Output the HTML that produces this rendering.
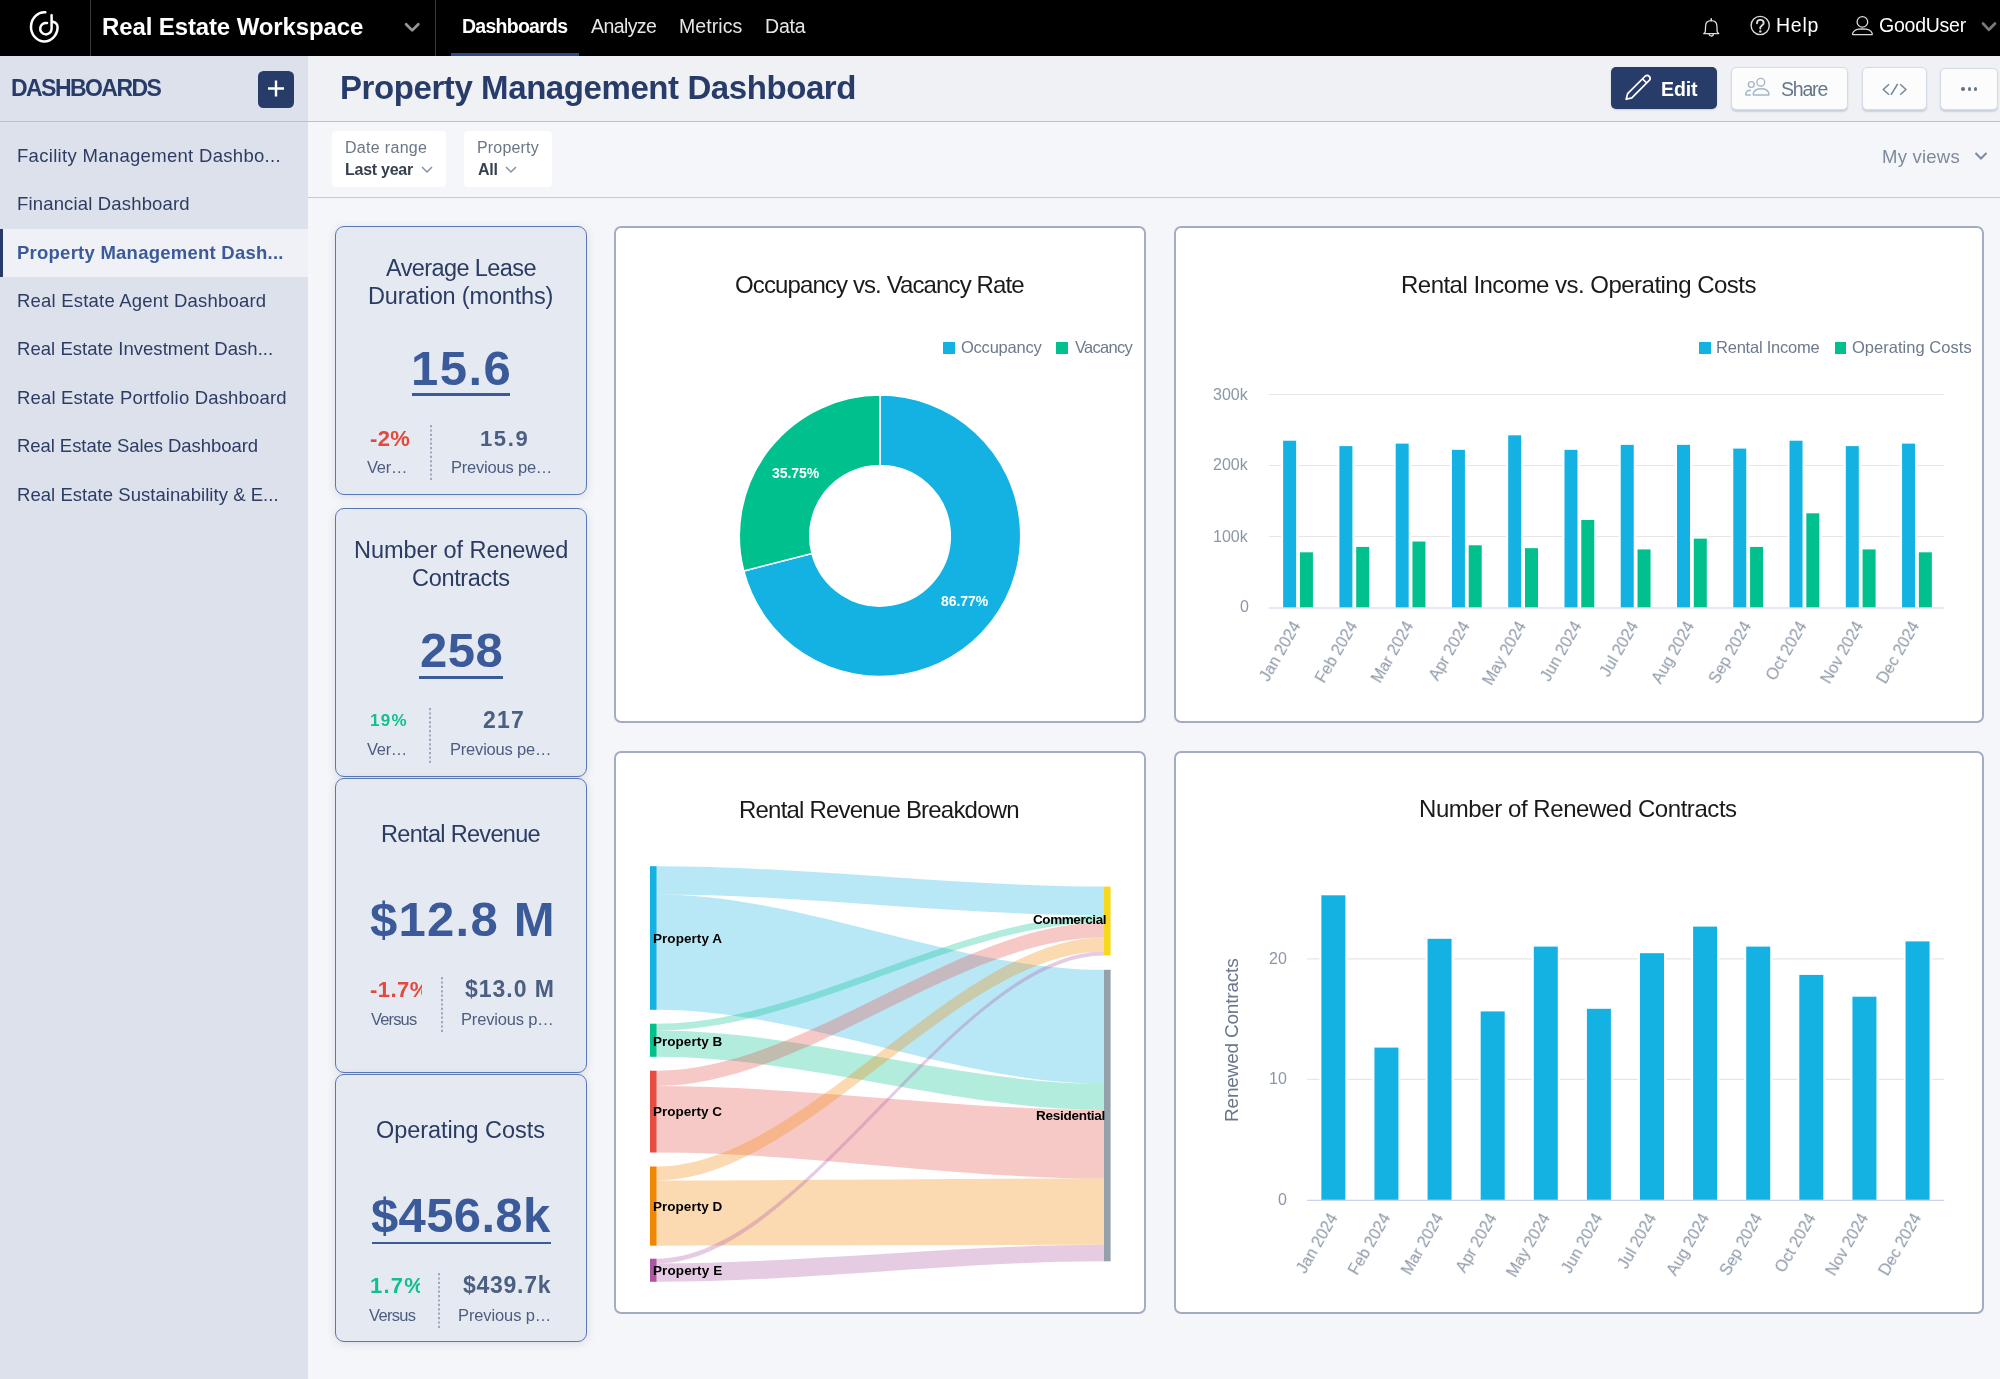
<!DOCTYPE html>
<html><head><meta charset="utf-8"><title>Property Management Dashboard</title>
<style>
html,body{margin:0;padding:0;width:2000px;height:1379px;overflow:hidden;background:#f5f6fa}
body{position:relative;font-family:"Liberation Sans",sans-serif}
.t{position:absolute;white-space:nowrap;line-height:1;-webkit-font-smoothing:antialiased;will-change:transform}
body{-webkit-font-smoothing:antialiased}
</style></head><body>
<div style="position:absolute;left:0px;top:0px;width:2000px;height:1379px;background:#f5f6fa"></div>
<div style="position:absolute;left:0px;top:0px;width:2000px;height:56px;background:#000"></div>
<div style="position:absolute;left:90px;top:0px;width:1px;height:56px;background:#3a3a3a"></div>
<div style="position:absolute;left:435px;top:0px;width:1px;height:56px;background:#3a3a3a"></div>
<svg style="position:absolute;left:0;top:0" width="90" height="56" viewBox="0 0 90 56">
<path d="M45.4 12.3 A13.3 14.6 0 1 0 57.6 27.4 C57.6 24.6 56 22.6 53 21.8" fill="none" stroke="#fff" stroke-width="2.5" stroke-linecap="round"/>
<path d="M51.6 15.2 L51.6 28.8 A5.7 5.7 0 1 1 47 23.1" fill="none" stroke="#fff" stroke-width="2.5" stroke-linecap="round"/>
</svg>
<div class="t" style="left:102.44px;top:15.00px;font-size:24px;color:#fff;font-weight:700;letter-spacing:-0.118px;">Real Estate Workspace</div>
<svg style="position:absolute;left:403px;top:20px" width="18" height="14"><path d="M3.1 4.3 L9.2 10.4 L15.3 4.3" fill="none" stroke="#979797" stroke-width="2.7" stroke-linecap="round" stroke-linejoin="round"/></svg>
<div class="t" style="left:461.73px;top:17.00px;font-size:19.5px;color:#fff;font-weight:700;letter-spacing:-0.740px;">Dashboards</div>
<div class="t" style="left:591.00px;top:17.00px;font-size:19.5px;color:#e6e6e6;letter-spacing:-0.590px;">Analyze</div>
<div class="t" style="left:679.44px;top:17.00px;font-size:19.5px;color:#e6e6e6;letter-spacing:0.075px;">Metrics</div>
<div class="t" style="left:765.44px;top:17.00px;font-size:19.5px;color:#e6e6e6;letter-spacing:-0.195px;">Data</div>
<div style="position:absolute;left:451px;top:53px;width:128px;height:3px;background:#2f4a8a"></div>
<svg style="position:absolute;left:0;top:0" width="2000" height="56">
<path d="M1703.8 33.7 L1705.3 31.8 L1705.6 26.3 C1705.6 22.5 1708 20.7 1711.2 20.7 C1714.4 20.7 1716.9 22.5 1716.9 26.3 L1717.2 31.8 L1718.7 33.7 Z" fill="none" stroke="#dcdcdc" stroke-width="1.3" stroke-linejoin="round"/>
<path d="M1711.2 20.7 L1711.2 18.9" stroke="#dcdcdc" stroke-width="1.6" stroke-linecap="round"/>
<path d="M1709.1 33.9 A2.1 2.1 0 0 0 1713.3 33.9" fill="none" stroke="#dcdcdc" stroke-width="1.3"/>
<circle cx="1760.2" cy="25.5" r="9.1" fill="none" stroke="#dcdcdc" stroke-width="1.4"/>
<path d="M1757 23.2 C1757 20.9 1758.4 19.9 1760.3 19.9 C1762.3 19.9 1763.7 21.1 1763.7 22.9 C1763.7 25.1 1760.4 25.6 1760.3 27.4 L1760.3 28.6" fill="none" stroke="#dcdcdc" stroke-width="1.9" stroke-linecap="round"/>
<circle cx="1760.3" cy="31.4" r="1.2" fill="#dcdcdc"/>
<circle cx="1862.4" cy="21.9" r="5.3" fill="none" stroke="#dcdcdc" stroke-width="1.3"/>
<path d="M1853.4 34.7 L1871.5 34.7 Q1872.6 34.7 1872.2 33.4 Q1871 28.9 1862.4 28.8 Q1853.8 28.9 1852.6 33.4 Q1852.3 34.7 1853.4 34.7 Z" fill="none" stroke="#dcdcdc" stroke-width="1.3"/>
</svg>
<div class="t" style="left:1776.44px;top:16.00px;font-size:19.5px;color:#fff;letter-spacing:0.756px;">Help</div>
<div class="t" style="left:1879.03px;top:16.00px;font-size:19.5px;color:#fff;letter-spacing:-0.236px;">GoodUser</div>
<svg style="position:absolute;left:1979px;top:19px" width="21" height="14"><path d="M4 4.5 L9.9 10.8 L16 4.5" fill="none" stroke="#7a7a7a" stroke-width="2.7" stroke-linecap="round" stroke-linejoin="round"/></svg>
<div style="position:absolute;left:0px;top:56px;width:308px;height:1323px;background:#dde1ec"></div>
<div class="t" style="left:11.00px;top:77.00px;font-size:23px;color:#283c6a;font-weight:700;letter-spacing:-1.555px;">DASHBOARDS</div>
<div style="position:absolute;left:258px;top:70.5px;width:36px;height:37px;background:#283c6a;border-radius:5.5px"></div>
<svg style="position:absolute;left:258px;top:70px" width="36" height="37"><path d="M18 10.5 L18 26.5 M10 18.5 L26 18.5" stroke="#fff" stroke-width="2.4"/></svg>
<div style="position:absolute;left:0px;top:121px;width:308px;height:1px;background:#b9c0d1"></div>
<div style="position:absolute;left:0px;top:229px;width:308px;height:48px;background:#eff1f6"></div>
<div style="position:absolute;left:0px;top:229px;width:3px;height:48px;background:#283c6a"></div>
<div class="t" style="left:17.12px;top:147.00px;font-size:18.5px;color:#2c3d63;letter-spacing:0.308px;">Facility Management Dashbo...</div>
<div class="t" style="left:17.12px;top:195.00px;font-size:18.5px;color:#2c3d63;letter-spacing:0.164px;">Financial Dashboard</div>
<div class="t" style="left:17.40px;top:244.00px;font-size:18.5px;color:#3a5a9a;font-weight:700;letter-spacing:0.246px;">Property Management Dash...</div>
<div class="t" style="left:17.12px;top:292.00px;font-size:18.5px;color:#2c3d63;letter-spacing:0.206px;">Real Estate Agent Dashboard</div>
<div class="t" style="left:17.12px;top:340.00px;font-size:18.5px;color:#2c3d63;letter-spacing:0.039px;">Real Estate Investment Dash...</div>
<div class="t" style="left:17.12px;top:389.00px;font-size:18.5px;color:#2c3d63;letter-spacing:0.177px;">Real Estate Portfolio Dashboard</div>
<div class="t" style="left:17.12px;top:437.00px;font-size:18.5px;color:#2c3d63;letter-spacing:-0.063px;">Real Estate Sales Dashboard</div>
<div class="t" style="left:17.12px;top:486.00px;font-size:18.5px;color:#2c3d63;letter-spacing:0.045px;">Real Estate Sustainability &amp; E...</div>
<div style="position:absolute;left:308px;top:56px;width:1692px;height:65px;background:#eff1f5"></div>
<div style="position:absolute;left:308px;top:121px;width:1692px;height:1px;background:#b9c0d1"></div>
<div class="t" style="left:339.66px;top:71.00px;font-size:33px;color:#283c6a;font-weight:700;letter-spacing:-0.417px;">Property Management Dashboard</div>
<div style="position:absolute;left:1611px;top:67px;width:106px;height:42px;background:#283c6a;border-radius:5px;box-shadow:0 1px 2px rgba(0,0,0,.15)"></div>
<svg style="position:absolute;left:0;top:0" width="2000" height="130">
<path d="M1626.2 99.3 L1627.6 93.7 L1645.3 76 A3 3 0 0 1 1649.5 80.2 L1631.8 97.9 Z M1642.5 78.8 L1646.7 83" fill="none" stroke="#fff" stroke-width="1.7" stroke-linejoin="round"/>
</svg>
<div class="t" style="left:1661.23px;top:80.00px;font-size:19.5px;color:#fff;font-weight:700;letter-spacing:-0.098px;">Edit</div>
<div style="position:absolute;left:1731px;top:67px;width:117px;height:42.5px;background:#fcfcfd;border:1px solid #d3dbe5;box-sizing:border-box;border-radius:5px;box-shadow:0 1.5px 1.5px rgba(120,140,165,.3)"></div>
<div style="position:absolute;left:1862px;top:67px;width:64.5px;height:43px;background:#fcfcfd;border:1px solid #d3dbe5;box-sizing:border-box;border-radius:5px;box-shadow:0 1.5px 1.5px rgba(120,140,165,.3)"></div>
<div style="position:absolute;left:1940px;top:68px;width:57.5px;height:42px;background:#fcfcfd;border:1px solid #d3dbe5;box-sizing:border-box;border-radius:5px;box-shadow:0 1.5px 1.5px rgba(120,140,165,.3)"></div>
<svg style="position:absolute;left:0;top:0" width="2000" height="130">
<g fill="none" stroke="#a5b6c5" stroke-width="1.4">
<circle cx="1751.3" cy="84.5" r="2.9"/>
<circle cx="1760.8" cy="82.3" r="3.9"/>
<path d="M1754 95 L1768.3 95 Q1769.2 95 1769 94 C1768.5 90.5 1765 88.7 1761.1 88.7 C1757.2 88.7 1753.7 90.5 1753.2 94 Q1753 95 1754 95 Z"/>
<path d="M1750.8 95 L1746.3 95 Q1745.6 95 1745.7 94.2 C1746 91.8 1748 90.3 1750.8 90.3"/>
</g></svg>
<div class="t" style="left:1781.12px;top:80.00px;font-size:19.5px;color:#65768a;letter-spacing:-1.203px;">Share</div>
<svg style="position:absolute;left:1880px;top:80px" width="28" height="18"><path d="M9 4.2 L3.3 9.5 L9 14.8 M20.2 4.2 L25.9 9.5 L20.2 14.8 M17.6 4 L11 14.8" fill="none" stroke="#76879a" stroke-width="1.5"/></svg>
<div style="position:absolute;left:1961.2px;top:87.1px;width:3.6px;height:3.6px;background:#67788b;border-radius:50%"></div>
<div style="position:absolute;left:1967.5px;top:87.1px;width:3.6px;height:3.6px;background:#67788b;border-radius:50%"></div>
<div style="position:absolute;left:1973.8px;top:87.1px;width:3.6px;height:3.6px;background:#67788b;border-radius:50%"></div>
<div style="position:absolute;left:308px;top:197px;width:1692px;height:1px;background:#c3c9d7"></div>
<div style="position:absolute;left:332px;top:131px;width:114px;height:56px;background:#fff;border-radius:4px"></div>
<div style="position:absolute;left:464px;top:131px;width:88px;height:56px;background:#fff;border-radius:4px"></div>
<div class="t" style="left:344.72px;top:140.00px;font-size:16px;color:#6b7685;letter-spacing:0.311px;">Date range</div>
<div class="t" style="left:344.96px;top:162.00px;font-size:16px;color:#37414e;font-weight:700;letter-spacing:-0.255px;">Last year</div>
<svg style="position:absolute;left:419px;top:163px" width="16" height="12"><path d="M3 4 L8 9 L13 4" fill="none" stroke="#8492a6" stroke-width="1.5"/></svg>
<div class="t" style="left:477.02px;top:140.00px;font-size:16px;color:#6b7685;letter-spacing:0.171px;">Property</div>
<div class="t" style="left:477.90px;top:162.00px;font-size:16px;color:#37414e;font-weight:700;letter-spacing:-0.280px;">All</div>
<svg style="position:absolute;left:503px;top:163px" width="16" height="12"><path d="M3 4 L8 9 L13 4" fill="none" stroke="#8492a6" stroke-width="1.5"/></svg>
<div class="t" style="left:1882.02px;top:148.00px;font-size:18.5px;color:#7d8a9b;letter-spacing:0.228px;">My views</div>
<svg style="position:absolute;left:1972px;top:148px" width="18" height="16"><path d="M3.5 5 L9 10.5 L14.5 5" fill="none" stroke="#7d8a9b" stroke-width="2"/></svg>
<div style="position:absolute;left:335px;top:225.5px;width:252px;height:269.0px;background:#e5e9f1;border:1.3px solid #5a78b6;box-sizing:border-box;border-radius:9px;box-shadow:0 2px 10px rgba(60,80,120,.14)"></div>
<div style="position:absolute;left:335px;top:508px;width:252px;height:268.5px;background:#e5e9f1;border:1.3px solid #5a78b6;box-sizing:border-box;border-radius:9px;box-shadow:0 2px 10px rgba(60,80,120,.14)"></div>
<div style="position:absolute;left:335px;top:777.5px;width:252px;height:295.5px;background:#e5e9f1;border:1.3px solid #5a78b6;box-sizing:border-box;border-radius:9px;box-shadow:0 2px 10px rgba(60,80,120,.14)"></div>
<div style="position:absolute;left:335px;top:1073.5px;width:252px;height:268.0px;background:#e5e9f1;border:1.3px solid #5a78b6;box-sizing:border-box;border-radius:9px;box-shadow:0 2px 10px rgba(60,80,120,.14)"></div>
<div class="t" style="left:386.20px;top:257.00px;font-size:23.5px;color:#2b3c63;letter-spacing:-0.595px;">Average Lease</div>
<div class="t" style="left:368.12px;top:285.00px;font-size:23.5px;color:#2b3c63;letter-spacing:-0.169px;">Duration (months)</div>
<div class="t" style="left:410.56px;top:344.00px;font-size:49px;color:#3b5a9a;font-weight:700;letter-spacing:1.450px;">15.6</div>
<div style="position:absolute;left:411.6px;top:393px;width:98.5px;height:2.6px;background:#3b5a9a"></div>
<div class="t" style="left:369.72px;top:428.00px;font-size:22px;color:#e3493c;font-weight:700;letter-spacing:0.335px;">-2%</div>
<div class="t" style="left:366.52px;top:459.00px;font-size:16.5px;color:#4c5d80;letter-spacing:-0.247px;">Ver…</div>
<div class="t" style="left:479.68px;top:428.00px;font-size:22px;color:#4b5f82;font-weight:700;letter-spacing:1.633px;">15.9</div>
<div class="t" style="left:450.88px;top:459.00px;font-size:16.5px;color:#4c5d80;letter-spacing:-0.207px;">Previous pe…</div>
<svg style="position:absolute;left:429px;top:425px" width="4" height="58"><line x1="2" y1="0" x2="2" y2="56" stroke="#6d7d9c" stroke-width="1.2" stroke-dasharray="2.2 2.2"/></svg>
<div class="t" style="left:353.62px;top:539.00px;font-size:23.5px;color:#2b3c63;letter-spacing:-0.075px;">Number of Renewed</div>
<div class="t" style="left:411.82px;top:567.00px;font-size:23.5px;color:#2b3c63;letter-spacing:-0.323px;">Contracts</div>
<div class="t" style="left:419.63px;top:626.00px;font-size:49px;color:#3b5a9a;font-weight:700;letter-spacing:0.450px;">258</div>
<div style="position:absolute;left:419px;top:676px;width:83.7px;height:2.6px;background:#3b5a9a"></div>
<div class="t" style="left:370.38px;top:712.00px;font-size:17px;color:#12c08a;font-weight:700;letter-spacing:1.323px;">19%</div>
<div class="t" style="left:366.72px;top:741.00px;font-size:16.5px;color:#4c5d80;letter-spacing:-0.313px;">Ver…</div>
<div class="t" style="left:482.59px;top:709.00px;font-size:23px;color:#4b5f82;font-weight:700;letter-spacing:1.215px;">217</div>
<div class="t" style="left:450.23px;top:741.00px;font-size:16.5px;color:#4c5d80;letter-spacing:-0.197px;">Previous pe…</div>
<svg style="position:absolute;left:428px;top:708px" width="4" height="58"><line x1="2" y1="0" x2="2" y2="56" stroke="#6d7d9c" stroke-width="1.2" stroke-dasharray="2.2 2.2"/></svg>
<div class="t" style="left:380.72px;top:823.00px;font-size:23.5px;color:#2b3c63;letter-spacing:-0.683px;">Rental Revenue</div>
<div class="t" style="left:369.96px;top:895.00px;font-size:49px;color:#3b5a9a;font-weight:700;letter-spacing:1.272px;">$12.8 M</div>
<div class="t" style="left:369.92px;top:979.00px;font-size:22px;color:#e3493c;font-weight:700;letter-spacing:0.475px;clip-path:inset(-5px 8px -5px -5px)">-1.7%</div>
<div class="t" style="left:370.67px;top:1011.00px;font-size:16.5px;color:#4c5d80;letter-spacing:-0.850px;">Versus</div>
<div class="t" style="left:464.55px;top:978.00px;font-size:23px;color:#4b5f82;font-weight:700;letter-spacing:0.968px;">$13.0 M</div>
<div class="t" style="left:461.38px;top:1011.00px;font-size:16.5px;color:#4c5d80;letter-spacing:-0.172px;">Previous p…</div>
<svg style="position:absolute;left:439.5px;top:977px" width="4" height="58"><line x1="2" y1="0" x2="2" y2="56" stroke="#6d7d9c" stroke-width="1.2" stroke-dasharray="2.2 2.2"/></svg>
<div class="t" style="left:376.44px;top:1119.00px;font-size:23.5px;color:#2b3c63;letter-spacing:-0.065px;">Operating Costs</div>
<div class="t" style="left:371.01px;top:1191.00px;font-size:49px;color:#3b5a9a;font-weight:700;letter-spacing:0.350px;">$456.8k</div>
<div style="position:absolute;left:372px;top:1241.5px;width:178.6px;height:2.6px;background:#3b5a9a"></div>
<div class="t" style="left:370.38px;top:1275.00px;font-size:22px;color:#12c08a;font-weight:700;letter-spacing:1.237px;clip-path:inset(-5px 6px -5px -5px)">1.7%</div>
<div class="t" style="left:368.52px;top:1307.00px;font-size:16.5px;color:#4c5d80;letter-spacing:-0.670px;">Versus</div>
<div class="t" style="left:463.11px;top:1274.00px;font-size:23px;color:#4b5f82;font-weight:700;letter-spacing:0.717px;">$439.7k</div>
<div class="t" style="left:457.68px;top:1307.00px;font-size:16.5px;color:#4c5d80;letter-spacing:-0.112px;">Previous p…</div>
<svg style="position:absolute;left:436.5px;top:1272.5px" width="4" height="58"><line x1="2" y1="0" x2="2" y2="56" stroke="#6d7d9c" stroke-width="1.2" stroke-dasharray="2.2 2.2"/></svg>
<div style="position:absolute;left:614px;top:226px;width:532px;height:497px;background:#fff;border:2px solid #a3adc2;box-sizing:border-box;border-radius:7px"></div>
<div style="position:absolute;left:1174px;top:226px;width:810px;height:497px;background:#fff;border:2px solid #a3adc2;box-sizing:border-box;border-radius:7px"></div>
<div style="position:absolute;left:614px;top:750.5px;width:532px;height:563.5px;background:#fff;border:2px solid #a3adc2;box-sizing:border-box;border-radius:7px"></div>
<div style="position:absolute;left:1174px;top:750.5px;width:810px;height:563.5px;background:#fff;border:2px solid #a3adc2;box-sizing:border-box;border-radius:7px"></div>
<div class="t" style="left:735.17px;top:273.00px;font-size:24px;color:#1a1a1a;letter-spacing:-0.884px;">Occupancy vs. Vacancy Rate</div>
<div style="position:absolute;left:943px;top:342px;width:12px;height:12px;background:#14b2e2"></div>
<div class="t" style="left:961.26px;top:339.00px;font-size:16.5px;color:#6d7a8c;letter-spacing:-0.230px;">Occupancy</div>
<div style="position:absolute;left:1056px;top:342px;width:12px;height:12px;background:#00c18d"></div>
<div class="t" style="left:1074.52px;top:339.00px;font-size:16.5px;color:#6d7a8c;letter-spacing:-0.710px;">Vacancy</div>
<svg style="position:absolute;left:0;top:0" width="2000" height="1379"><path d="M880.00 395.10 A140.7 140.7 0 1 1 743.78 571.03 L811.94 553.40 A70.3 70.3 0 1 0 880.00 465.50 Z" fill="#14b2e2" stroke="#fff" stroke-width="1.5"/><path d="M743.78 571.03 A140.7 140.7 0 0 1 880.00 395.10 L880.00 465.50 A70.3 70.3 0 0 0 811.94 553.40 Z" fill="#00c18d" stroke="#fff" stroke-width="1.5"/></svg>
<div class="t" style="left:772.47px;top:466.00px;font-size:14px;color:#fff;font-weight:700;letter-spacing:-0.080px;">35.75%</div>
<div class="t" style="left:940.63px;top:594.00px;font-size:14px;color:#fff;font-weight:700;letter-spacing:-0.052px;">86.77%</div>
<div class="t" style="left:1400.78px;top:273.00px;font-size:24px;color:#1a1a1a;letter-spacing:-0.524px;">Rental Income vs. Operating Costs</div>
<div style="position:absolute;left:1699px;top:342px;width:11.7px;height:11.7px;background:#14b2e2"></div>
<div class="t" style="left:1716.38px;top:339.00px;font-size:16.5px;color:#6d7a8c;letter-spacing:-0.222px;">Rental Income</div>
<div style="position:absolute;left:1834.8px;top:342px;width:11.7px;height:11.7px;background:#00c18d"></div>
<div class="t" style="left:1851.86px;top:339.00px;font-size:16.5px;color:#6d7a8c;letter-spacing:0.029px;">Operating Costs</div>
<svg style="position:absolute;left:0;top:0" width="2000" height="1379"><line x1="1268.8" y1="536.5" x2="1944" y2="536.5" stroke="#e6e6e6" stroke-width="1.2"/><line x1="1268.8" y1="465.5" x2="1944" y2="465.5" stroke="#e6e6e6" stroke-width="1.2"/><line x1="1268.8" y1="394.5" x2="1944" y2="394.5" stroke="#e6e6e6" stroke-width="1.2"/><rect x="1282.13" y="439.71" width="15" height="168.79" fill="#14b2e2" stroke="#fff" stroke-width="2"/><rect x="1298.93" y="551.32" width="15" height="57.18" fill="#00c18d" stroke="#fff" stroke-width="2"/><rect x="1338.40" y="445.10" width="15" height="163.40" fill="#14b2e2" stroke="#fff" stroke-width="2"/><rect x="1355.20" y="545.93" width="15" height="62.57" fill="#00c18d" stroke="#fff" stroke-width="2"/><rect x="1394.67" y="442.61" width="15" height="165.89" fill="#14b2e2" stroke="#fff" stroke-width="2"/><rect x="1411.47" y="540.54" width="15" height="67.96" fill="#00c18d" stroke="#fff" stroke-width="2"/><rect x="1450.93" y="448.83" width="15" height="159.67" fill="#14b2e2" stroke="#fff" stroke-width="2"/><rect x="1467.73" y="544.27" width="15" height="64.23" fill="#00c18d" stroke="#fff" stroke-width="2"/><rect x="1507.20" y="434.31" width="15" height="174.19" fill="#14b2e2" stroke="#fff" stroke-width="2"/><rect x="1524.00" y="547.17" width="15" height="61.33" fill="#00c18d" stroke="#fff" stroke-width="2"/><rect x="1563.47" y="448.83" width="15" height="159.67" fill="#14b2e2" stroke="#fff" stroke-width="2"/><rect x="1580.27" y="518.96" width="15" height="89.54" fill="#00c18d" stroke="#fff" stroke-width="2"/><rect x="1619.73" y="443.85" width="15" height="164.65" fill="#14b2e2" stroke="#fff" stroke-width="2"/><rect x="1636.53" y="548.42" width="15" height="60.08" fill="#00c18d" stroke="#fff" stroke-width="2"/><rect x="1676.00" y="443.85" width="15" height="164.65" fill="#14b2e2" stroke="#fff" stroke-width="2"/><rect x="1692.80" y="537.63" width="15" height="70.87" fill="#00c18d" stroke="#fff" stroke-width="2"/><rect x="1732.27" y="447.59" width="15" height="160.91" fill="#14b2e2" stroke="#fff" stroke-width="2"/><rect x="1749.07" y="545.93" width="15" height="62.57" fill="#00c18d" stroke="#fff" stroke-width="2"/><rect x="1788.53" y="439.71" width="15" height="168.79" fill="#14b2e2" stroke="#fff" stroke-width="2"/><rect x="1805.33" y="512.32" width="15" height="96.18" fill="#00c18d" stroke="#fff" stroke-width="2"/><rect x="1844.80" y="445.10" width="15" height="163.40" fill="#14b2e2" stroke="#fff" stroke-width="2"/><rect x="1861.60" y="548.42" width="15" height="60.08" fill="#00c18d" stroke="#fff" stroke-width="2"/><rect x="1901.07" y="442.61" width="15" height="165.89" fill="#14b2e2" stroke="#fff" stroke-width="2"/><rect x="1917.87" y="551.32" width="15" height="57.18" fill="#00c18d" stroke="#fff" stroke-width="2"/><line x1="1268.8" y1="608.0" x2="1944" y2="608.0" stroke="#c9d3ea" stroke-width="1.2"/></svg>
<div class="t" style="left:1239.68px;top:599.00px;font-size:16px;color:#8b97a6;letter-spacing:0.000px;">0</div>
<div class="t" style="left:1213.28px;top:529.00px;font-size:16px;color:#8b97a6;letter-spacing:0.000px;">100k</div>
<div class="t" style="left:1213.28px;top:457.00px;font-size:16px;color:#8b97a6;letter-spacing:0.000px;">200k</div>
<div class="t" style="left:1213.28px;top:387.00px;font-size:16px;color:#8b97a6;letter-spacing:0.000px;">300k</div>
<div class="t" style="left:1231.10px;top:615.00px;font-size:16px;color:#8b97a6;transform-origin:100% 50%;transform:rotate(-60deg)">Jan 2024</div>
<div class="t" style="left:1285.60px;top:615.00px;font-size:16px;color:#8b97a6;transform-origin:100% 50%;transform:rotate(-60deg)">Feb 2024</div>
<div class="t" style="left:1341.88px;top:615.00px;font-size:16px;color:#8b97a6;transform-origin:100% 50%;transform:rotate(-60deg)">Mar 2024</div>
<div class="t" style="left:1400.80px;top:615.00px;font-size:16px;color:#8b97a6;transform-origin:100% 50%;transform:rotate(-60deg)">Apr 2024</div>
<div class="t" style="left:1451.74px;top:615.00px;font-size:16px;color:#8b97a6;transform-origin:100% 50%;transform:rotate(-60deg)">May 2024</div>
<div class="t" style="left:1512.44px;top:615.00px;font-size:16px;color:#8b97a6;transform-origin:100% 50%;transform:rotate(-60deg)">Jun 2024</div>
<div class="t" style="left:1574.05px;top:615.00px;font-size:16px;color:#8b97a6;transform-origin:100% 50%;transform:rotate(-60deg)">Jul 2024</div>
<div class="t" style="left:1622.30px;top:615.00px;font-size:16px;color:#8b97a6;transform-origin:100% 50%;transform:rotate(-60deg)">Aug 2024</div>
<div class="t" style="left:1678.56px;top:615.00px;font-size:16px;color:#8b97a6;transform-origin:100% 50%;transform:rotate(-60deg)">Sep 2024</div>
<div class="t" style="left:1738.41px;top:615.00px;font-size:16px;color:#8b97a6;transform-origin:100% 50%;transform:rotate(-60deg)">Oct 2024</div>
<div class="t" style="left:1791.11px;top:615.00px;font-size:16px;color:#8b97a6;transform-origin:100% 50%;transform:rotate(-60deg)">Nov 2024</div>
<div class="t" style="left:1847.38px;top:615.00px;font-size:16px;color:#8b97a6;transform-origin:100% 50%;transform:rotate(-60deg)">Dec 2024</div>
<div class="t" style="left:1419.38px;top:797.00px;font-size:24px;color:#1a1a1a;letter-spacing:-0.437px;">Number of Renewed Contracts</div>
<svg style="position:absolute;left:0;top:0" width="2000" height="1379"><line x1="1307" y1="1079.4" x2="1944.3" y2="1079.4" stroke="#e6e6e6" stroke-width="1.2"/><line x1="1307" y1="958.9000000000001" x2="1944.3" y2="958.9000000000001" stroke="#e6e6e6" stroke-width="1.2"/><rect x="1320.35" y="894.30" width="26" height="306.60" fill="#14b2e2" stroke="#fff" stroke-width="2"/><rect x="1373.46" y="1046.60" width="26" height="154.30" fill="#14b2e2" stroke="#fff" stroke-width="2"/><rect x="1426.57" y="937.80" width="26" height="263.10" fill="#14b2e2" stroke="#fff" stroke-width="2"/><rect x="1479.68" y="1010.40" width="26" height="190.50" fill="#14b2e2" stroke="#fff" stroke-width="2"/><rect x="1532.79" y="945.60" width="26" height="255.30" fill="#14b2e2" stroke="#fff" stroke-width="2"/><rect x="1585.90" y="1007.80" width="26" height="193.10" fill="#14b2e2" stroke="#fff" stroke-width="2"/><rect x="1639.00" y="952.20" width="26" height="248.70" fill="#14b2e2" stroke="#fff" stroke-width="2"/><rect x="1692.11" y="925.60" width="26" height="275.30" fill="#14b2e2" stroke="#fff" stroke-width="2"/><rect x="1745.22" y="945.60" width="26" height="255.30" fill="#14b2e2" stroke="#fff" stroke-width="2"/><rect x="1798.33" y="973.90" width="26" height="227.00" fill="#14b2e2" stroke="#fff" stroke-width="2"/><rect x="1851.44" y="995.70" width="26" height="205.20" fill="#14b2e2" stroke="#fff" stroke-width="2"/><rect x="1904.55" y="940.40" width="26" height="260.50" fill="#14b2e2" stroke="#fff" stroke-width="2"/><line x1="1307" y1="1200.4" x2="1944.3" y2="1200.4" stroke="#c9d3ea" stroke-width="1.2"/></svg>
<div class="t" style="left:1278.28px;top:1192.00px;font-size:16px;color:#8b97a6;letter-spacing:0.000px;">0</div>
<div class="t" style="left:1269.40px;top:1071.00px;font-size:16px;color:#8b97a6;letter-spacing:0.000px;">10</div>
<div class="t" style="left:1269.40px;top:951.00px;font-size:16px;color:#8b97a6;letter-spacing:0.000px;">20</div>
<div class="t" style="left:1267.72px;top:1206.50px;font-size:16px;color:#8b97a6;transform-origin:100% 50%;transform:rotate(-60deg)">Jan 2024</div>
<div class="t" style="left:1319.06px;top:1206.50px;font-size:16px;color:#8b97a6;transform-origin:100% 50%;transform:rotate(-60deg)">Feb 2024</div>
<div class="t" style="left:1372.18px;top:1206.50px;font-size:16px;color:#8b97a6;transform-origin:100% 50%;transform:rotate(-60deg)">Mar 2024</div>
<div class="t" style="left:1427.95px;top:1206.50px;font-size:16px;color:#8b97a6;transform-origin:100% 50%;transform:rotate(-60deg)">Apr 2024</div>
<div class="t" style="left:1475.73px;top:1206.50px;font-size:16px;color:#8b97a6;transform-origin:100% 50%;transform:rotate(-60deg)">May 2024</div>
<div class="t" style="left:1533.27px;top:1206.50px;font-size:16px;color:#8b97a6;transform-origin:100% 50%;transform:rotate(-60deg)">Jun 2024</div>
<div class="t" style="left:1591.72px;top:1206.50px;font-size:16px;color:#8b97a6;transform-origin:100% 50%;transform:rotate(-60deg)">Jul 2024</div>
<div class="t" style="left:1636.81px;top:1206.50px;font-size:16px;color:#8b97a6;transform-origin:100% 50%;transform:rotate(-60deg)">Aug 2024</div>
<div class="t" style="left:1689.92px;top:1206.50px;font-size:16px;color:#8b97a6;transform-origin:100% 50%;transform:rotate(-60deg)">Sep 2024</div>
<div class="t" style="left:1746.60px;top:1206.50px;font-size:16px;color:#8b97a6;transform-origin:100% 50%;transform:rotate(-60deg)">Oct 2024</div>
<div class="t" style="left:1796.15px;top:1206.50px;font-size:16px;color:#8b97a6;transform-origin:100% 50%;transform:rotate(-60deg)">Nov 2024</div>
<div class="t" style="left:1849.26px;top:1206.50px;font-size:16px;color:#8b97a6;transform-origin:100% 50%;transform:rotate(-60deg)">Dec 2024</div>
<div class="t" style="left:1150.30px;top:1030.50px;font-size:19px;letter-spacing:-0.2px;color:#6b778a;transform:rotate(-90deg);width:163px;text-align:center">Renewed Contracts</div>
<div class="t" style="left:739.48px;top:798.00px;font-size:24px;color:#1a1a1a;letter-spacing:-0.793px;">Rental Revenue Breakdown</div>
<svg style="position:absolute;left:0;top:0" width="2000" height="1379"><path d="M656.6 866.2 C804.24 866.2 956.36 886.6 1104 886.6 L1104 915.4 C956.36 915.4 804.24 894.5 656.6 894.5 Z" fill="#14b2e2" fill-opacity="0.3"/><path d="M656.6 894.5 C804.24 894.5 956.36 969.8 1104 969.8 L1104 1083.8 C956.36 1083.8 804.24 1009.8 656.6 1009.8 Z" fill="#14b2e2" fill-opacity="0.3"/><path d="M656.6 1023.7 C804.24 1023.7 956.36 915.4 1104 915.4 L1104 922.5 C956.36 922.5 804.24 1030.5 656.6 1030.5 Z" fill="#00c18d" fill-opacity="0.3"/><path d="M656.6 1030.5 C804.24 1030.5 956.36 1083.8 1104 1083.8 L1104 1109.9 C956.36 1109.9 804.24 1056.8 656.6 1056.8 Z" fill="#00c18d" fill-opacity="0.3"/><path d="M656.6 1070.7 C804.24 1070.7 956.36 922.5 1104 922.5 L1104 937.5 C956.36 937.5 804.24 1086 656.6 1086 Z" fill="#e54d42" fill-opacity="0.3"/><path d="M656.6 1086 C804.24 1086 956.36 1109.9 1104 1109.9 L1104 1178.6 C956.36 1178.6 804.24 1152.5 656.6 1152.5 Z" fill="#e54d42" fill-opacity="0.3"/><path d="M656.6 1166.5 C804.24 1166.5 956.36 937.5 1104 937.5 L1104 951.5 C956.36 951.5 804.24 1180.4 656.6 1180.4 Z" fill="#f18600" fill-opacity="0.3"/><path d="M656.6 1180.4 C804.24 1180.4 956.36 1178.6 1104 1178.6 L1104 1244.8 C956.36 1244.8 804.24 1245.7 656.6 1245.7 Z" fill="#f18600" fill-opacity="0.3"/><path d="M656.6 1258.7 C804.24 1258.7 956.36 951.5 1104 951.5 L1104 955.4 C956.36 955.4 804.24 1263.5 656.6 1263.5 Z" fill="#ab55a3" fill-opacity="0.3"/><path d="M656.6 1263.5 C804.24 1263.5 956.36 1244.8 1104 1244.8 L1104 1261.3 C956.36 1261.3 804.24 1281.8 656.6 1281.8 Z" fill="#ab55a3" fill-opacity="0.3"/><rect x="650" y="866.2" width="6.6" height="143.5999999999999" fill="#14b2e2"/><rect x="650" y="1023.7" width="6.6" height="33.09999999999991" fill="#00c18d"/><rect x="650" y="1070.7" width="6.6" height="81.79999999999995" fill="#e54d42"/><rect x="650" y="1166.5" width="6.6" height="79.20000000000005" fill="#f18600"/><rect x="650" y="1258.7" width="6.6" height="23.09999999999991" fill="#ab55a3"/><rect x="1104" y="886.6" width="6.6" height="68.8" fill="#f8d81c"/><rect x="1104" y="969.8" width="6.6" height="291.5" fill="#94a1ad"/></svg>
<div class="t" style="left:653.12px;top:932.00px;font-size:13.5px;color:#000;font-weight:700;letter-spacing:0.056px;">Property A</div>
<div class="t" style="left:653.12px;top:1035.00px;font-size:13.5px;color:#000;font-weight:700;letter-spacing:0.026px;">Property B</div>
<div class="t" style="left:653.12px;top:1105.00px;font-size:13.5px;color:#000;font-weight:700;letter-spacing:0.003px;">Property C</div>
<div class="t" style="left:653.12px;top:1200.00px;font-size:13.5px;color:#000;font-weight:700;letter-spacing:0.026px;">Property D</div>
<div class="t" style="left:653.12px;top:1264.00px;font-size:13.5px;color:#000;font-weight:700;letter-spacing:0.101px;">Property E</div>
<div class="t" style="left:1033.46px;top:913.00px;font-size:13.5px;color:#000;font-weight:700;letter-spacing:-0.422px;">Commercial</div>
<div class="t" style="left:1035.62px;top:1109.00px;font-size:13.5px;color:#000;font-weight:700;letter-spacing:-0.270px;">Residential</div>
</body></html>
